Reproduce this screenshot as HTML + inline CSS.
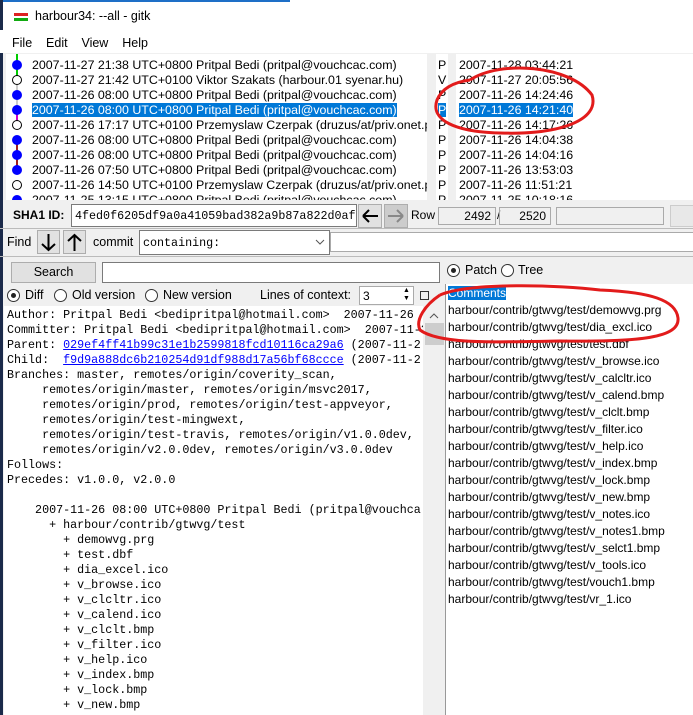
<!DOCTYPE html>
<html><head><meta charset="utf-8"><style>
*{margin:0;padding:0;box-sizing:border-box}
body{width:693px;height:715px;overflow:hidden;background:#f0f0f0;font-family:"Liberation Sans",sans-serif;font-size:12px;color:#000;position:relative}
.a{position:absolute;white-space:pre}
.m{font-family:"Liberation Mono",monospace;font-size:11.7px}
.w{background:#fff}
.sel{background:#0078d7;color:#fff}
.bx{position:absolute;background:#fff;border:1px solid #7a7a7a}
.btn{position:absolute;background:#e1e1e1;border:1px solid #adadad}
.rad{position:absolute;width:13px;height:13px;border:1px solid #333;border-radius:50%;background:#fff}
.rad.on::after{content:"";position:absolute;left:3px;top:3px;width:5px;height:5px;border-radius:50%;background:#222}
a{color:#00f;text-decoration:underline}
</style></head><body>
<div class="a" style="left:0;top:0;width:693px;height:30px;background:#fff"></div>
<div class="a" style="left:0;top:0;width:290px;height:2px;background:#1e6fc7"></div>
<div class="a" style="left:0;top:0;width:3px;height:715px;background:#1b2a4a"></div>
<div class="a" style="left:14px;top:13px;width:14px;height:3px;background:#d22"></div>
<div class="a" style="left:14px;top:18px;width:14px;height:3px;background:#1a1"></div>
<div class="a" style="left:35px;top:9px;font-size:12.5px">harbour34: --all - gitk</div>
<div class="a" style="left:0;top:30px;width:693px;height:23px;background:#fff"></div>
<div class="a" style="left:12px;top:36px;font-size:12.5px">File&nbsp;&nbsp;&nbsp;&nbsp;Edit&nbsp;&nbsp;&nbsp;&nbsp;View&nbsp;&nbsp;&nbsp;&nbsp;Help</div>

<div class="a w" style="left:6px;top:54px;width:421px;height:146px;overflow:hidden">
<svg width="30" height="146" style="position:absolute;left:0;top:0">
<line x1="11" y1="0" x2="11" y2="27" stroke="#0c0" stroke-width="2"/>
<line x1="11" y1="27" x2="11" y2="57" stroke="#999" stroke-width="1"/>
<line x1="11" y1="57" x2="11" y2="71" stroke="#c0c" stroke-width="2"/>
<line x1="11" y1="86" x2="11" y2="116" stroke="#a02020" stroke-width="2"/>
<g fill="#00f"><circle cx="11" cy="11" r="5"/><circle cx="11" cy="41" r="5"/><circle cx="11" cy="56" r="5"/><circle cx="11" cy="86" r="5"/><circle cx="11" cy="101" r="5"/><circle cx="11" cy="116" r="5"/><circle cx="11" cy="146" r="5"/></g>
<g fill="#fff" stroke="#000"><circle cx="11" cy="26" r="4.5"/><circle cx="11" cy="71" r="4.5"/><circle cx="11" cy="131" r="4.5"/></g>
</svg>
<div class="a" style="left:26px;top:4px;line-height:15px;font-size:12.4px">2007-11-27 21:38 UTC+0800 Pritpal Bedi (pritpal@vouchcac.com)
2007-11-27 21:42 UTC+0100 Viktor Szakats (harbour.01 syenar.hu)
2007-11-26 08:00 UTC+0800 Pritpal Bedi (pritpal@vouchcac.com)
<span class="sel">2007-11-26 08:00 UTC+0800 Pritpal Bedi (pritpal@vouchcac.com)</span>
2007-11-26 17:17 UTC+0100 Przemyslaw Czerpak (druzus/at/priv.onet.pl
2007-11-26 08:00 UTC+0800 Pritpal Bedi (pritpal@vouchcac.com)
2007-11-26 08:00 UTC+0800 Pritpal Bedi (pritpal@vouchcac.com)
2007-11-26 07:50 UTC+0800 Pritpal Bedi (pritpal@vouchcac.com)
2007-11-26 14:50 UTC+0100 Przemyslaw Czerpak (druzus/at/priv.onet.pl
2007-11-25 13:15 UTC+0800 Pritpal Bedi (pritpal@vouchcac.com)</div>
</div>
<div class="a w" style="left:436px;top:54px;width:12px;height:146px;overflow:hidden"><div class="a" style="left:2px;top:4px;line-height:15px;font-size:12.4px">P
V
P
<span class="sel">P</span>
P
P
P
P
P
P</div></div>
<div class="a w" style="left:456px;top:54px;width:237px;height:146px;overflow:hidden"><div class="a" style="left:3px;top:4px;line-height:15px;font-size:12.4px">2007-11-28 03:44:21
2007-11-27 20:05:56
2007-11-26 14:24:46
<span class="sel">2007-11-26 14:21:40</span>
2007-11-26 14:17:26
2007-11-26 14:04:38
2007-11-26 14:04:16
2007-11-26 13:53:03
2007-11-26 11:51:21
2007-11-25 10:18:16</div></div>

<div class="a" style="left:13px;top:208px;font-weight:bold">SHA1 ID:</div>
<div class="bx" style="left:71px;top:204px;width:286px;height:23px"></div>
<div class="a m" style="left:75px;top:209px">4fed0f6205df9a0a41059bad382a9b87a822d0af</div>
<div class="btn" style="left:358px;top:204px;width:24px;height:24px"><svg width="22" height="22"><path d="M4 11H19M4 11L10 5M4 11L10 17" stroke="#000" stroke-width="2" fill="none"/></svg></div>
<div class="btn" style="left:384px;top:204px;width:24px;height:24px;background:#ccc"><svg width="22" height="22"><path d="M3 11H18M18 11L12 5M18 11L12 17" stroke="#888" stroke-width="2" fill="none"/></svg></div>
<div class="a" style="left:411px;top:208px">Row</div>
<div class="a" style="left:438px;top:207px;width:58px;height:18px;border:1px solid #aaa;text-align:right;padding-right:4px;line-height:16px">2492</div>
<div class="a" style="left:497px;top:208px">/</div>
<div class="a" style="left:499px;top:207px;width:52px;height:18px;border:1px solid #aaa;text-align:right;padding-right:4px;line-height:16px">2520</div>
<div class="a" style="left:556px;top:207px;width:108px;height:18px;border:1px solid #aaa"></div>
<div class="a" style="left:670px;top:205px;width:30px;height:22px;border:1px solid #ccc;background:#e8e8e8"></div>
<div class="a" style="left:0;top:228px;width:693px;height:1px;background:#bbb"></div>

<div class="a" style="left:7px;top:235px;font-size:12.5px">Find</div>
<div class="btn" style="left:37px;top:230px;width:23px;height:24px"><svg width="21" height="22"><path d="M10.5 3V19M4 13L10.5 19L17 13" stroke="#000" stroke-width="2" fill="none"/></svg></div>
<div class="btn" style="left:63px;top:230px;width:23px;height:24px"><svg width="21" height="22"><path d="M10.5 20V4M4 10L10.5 4L17 10" stroke="#000" stroke-width="2" fill="none"/></svg></div>
<div class="a" style="left:93px;top:235px;font-size:12.5px">commit</div>
<div class="bx" style="left:139px;top:230px;width:191px;height:25px"></div>
<div class="a m" style="left:143px;top:236px">containing:</div>
<svg class="a" style="left:315px;top:238px" width="10" height="8"><path d="M1 2L5 6L9 2" stroke="#555" fill="none"/></svg>
<div class="bx" style="left:330px;top:232px;width:370px;height:20px;border-color:#aaa"></div>
<div class="a" style="left:0;top:256px;width:693px;height:1px;background:#bbb"></div>

<div class="btn" style="left:11px;top:262px;width:85px;height:21px;text-align:center;line-height:19px;font-size:12.5px">Search</div>
<div class="bx" style="left:102px;top:262px;width:338px;height:21px"></div>
<div class="rad on" style="left:447px;top:264px"></div>
<div class="a" style="left:465px;top:263px;font-size:12.5px">Patch</div>
<div class="rad" style="left:501px;top:264px"></div>
<div class="a" style="left:518px;top:263px;font-size:12.5px">Tree</div>

<div class="rad on" style="left:7px;top:289px"></div>
<div class="a" style="left:25px;top:288px;font-size:12.5px">Diff</div>
<div class="rad" style="left:54px;top:289px"></div>
<div class="a" style="left:72px;top:288px;font-size:12.5px">Old version</div>
<div class="rad" style="left:145px;top:289px"></div>
<div class="a" style="left:163px;top:288px;font-size:12.5px">New version</div>
<div class="a" style="left:260px;top:288px;font-size:12.5px">Lines of context:</div>
<div class="bx" style="left:359px;top:286px;width:55px;height:19px;border-color:#aaa"></div>
<div class="a" style="left:363px;top:289px">3</div>
<div class="a" style="left:403px;top:287px;font-size:7px;line-height:8px">▲<br>▼</div>
<div class="a" style="left:420px;top:291px;width:9px;height:9px;border:1px solid #333"></div>

<div class="a w" style="left:4px;top:306px;width:419px;height:409px;overflow:hidden">
<div class="a m" style="left:3px;top:2px;line-height:15px">Author: Pritpal Bedi &lt;bedipritpal@hotmail.com&gt;  2007-11-26
Committer: Pritpal Bedi &lt;bedipritpal@hotmail.com&gt;  2007-11-2
Parent: <a>029ef4ff41b99c31e1b2599818fcd10116ca29a6</a> (2007-11-2
Child:  <a>f9d9a888dc6b210254d91df988d17a56bf68ccce</a> (2007-11-2
Branches: master, remotes/origin/coverity_scan,
     remotes/origin/master, remotes/origin/msvc2017,
     remotes/origin/prod, remotes/origin/test-appveyor,
     remotes/origin/test-mingwext,
     remotes/origin/test-travis, remotes/origin/v1.0.0dev,
     remotes/origin/v2.0.0dev, remotes/origin/v3.0.0dev
Follows:
Precedes: v1.0.0, v2.0.0

    2007-11-26 08:00 UTC+0800 Pritpal Bedi (pritpal@vouchca
      + harbour/contrib/gtwvg/test
        + demowvg.prg
        + test.dbf
        + dia_excel.ico
        + v_browse.ico
        + v_clcltr.ico
        + v_calend.ico
        + v_clclt.bmp
        + v_filter.ico
        + v_help.ico
        + v_index.bmp
        + v_lock.bmp
        + v_new.bmp</div></div>
<div class="a" style="left:424px;top:306px;width:21px;height:409px;background:#f0f0f0"></div>
<svg class="a" style="left:429px;top:312px" width="10" height="8"><path d="M1 6L5 2L9 6" stroke="#555" fill="none"/></svg>
<div class="a" style="left:425px;top:323px;width:19px;height:22px;background:#cdcdcd"></div>

<div class="a w" style="left:445px;top:284px;width:248px;height:431px;border-left:1px solid #999;overflow:hidden">
<div class="a" style="left:2px;top:1px;line-height:17px"><span class="sel">Comments</span>
harbour/contrib/gtwvg/test/demowvg.prg
harbour/contrib/gtwvg/test/dia_excl.ico
harbour/contrib/gtwvg/test/test.dbf
harbour/contrib/gtwvg/test/v_browse.ico
harbour/contrib/gtwvg/test/v_calcltr.ico
harbour/contrib/gtwvg/test/v_calend.bmp
harbour/contrib/gtwvg/test/v_clclt.bmp
harbour/contrib/gtwvg/test/v_filter.ico
harbour/contrib/gtwvg/test/v_help.ico
harbour/contrib/gtwvg/test/v_index.bmp
harbour/contrib/gtwvg/test/v_lock.bmp
harbour/contrib/gtwvg/test/v_new.bmp
harbour/contrib/gtwvg/test/v_notes.ico
harbour/contrib/gtwvg/test/v_notes1.bmp
harbour/contrib/gtwvg/test/v_selct1.bmp
harbour/contrib/gtwvg/test/v_tools.ico
harbour/contrib/gtwvg/test/vouch1.bmp
harbour/contrib/gtwvg/test/vr_1.ico</div></div>

<svg class="a" style="left:0;top:0" width="693" height="715">
<g fill="none" stroke="#e21b1b" stroke-width="3">
<path d="M470 80 C500 60,570 65,592 95 C600 120,560 135,500 133 C455 132,430 120,437 100 C442 88,455 82,470 80"/>
<path d="M440 295 C470 282,560 285,600 290 C650 292,676 300,678 318 C680 338,640 342,560 341 C500 342,440 345,420 330 C415 320,425 305,440 295"/>
</g></svg>
</body></html>
